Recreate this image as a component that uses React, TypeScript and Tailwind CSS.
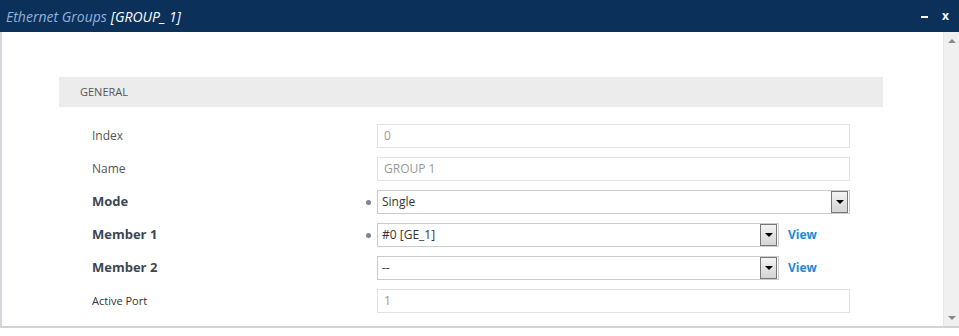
import { ReactNode } from "react";

const font = { fontFamily: '"Open Sans", "Noto Sans", sans-serif' };

function Dropdown() {
  return (
    <span className="flex h-[22px] w-[17px] items-center justify-center border border-[#777] bg-gradient-to-b from-[#f4f4f4] to-[#d4d4d4]">
      <span className="h-0 w-0 border-x-[4px] border-t-[4px] border-x-transparent border-t-black" />
    </span>
  );
}

type RowProps = {
  label: string;
  bold?: boolean;
  small?: boolean;
  required?: boolean;
  children: ReactNode;
};

function Row({ label, bold, small, required, children }: RowProps) {
  const labelCls = bold
    ? "text-[13px] font-bold text-[#3c4650]"
    : small
      ? "text-[11px] text-[#333]"
      : "text-[12px] text-[#555]";
  return (
    <div className="flex h-[24px] items-center">
      <div className={`w-[307px] pl-[33px] ${labelCls}`}>{label}</div>
      <div className="flex w-[11px] items-center justify-start">
        {required && <span className="h-[5px] w-[5px] rounded-full bg-[#7c8590]" />}
      </div>
      {children}
    </div>
  );
}

function TextBox({ value }: { value: string }) {
  return (
    <div className="flex h-[24px] w-[473px] items-center border border-[#e2e2e2] pl-[6px] text-[12px] text-[#999]">
      {value}
    </div>
  );
}

function Select({ value, width, view }: { value: string; width: string; view?: boolean }) {
  return (
    <>
      <div className={`flex h-[24px] ${width} items-center justify-between border border-[#c8cbd0] pl-[4px] pr-[1px] text-[12px] text-[#333]`}>
        <span>{value}</span>
        <Dropdown />
      </div>
      {view && <span className="ml-[9px] text-[12px] font-bold text-[#1a8ad6]">View</span>}
    </>
  );
}

export default function App() {
  return (
    <div className="relative h-[336px] w-[959px] overflow-hidden bg-white" style={font}>
      <div className="flex h-[32px] items-center justify-between bg-[#0b3059] pl-[6px] pr-[10px]">
        <div className="flex items-center gap-[4px] text-[14px] italic">
          <span className="text-[#8fb3de]">Ethernet Groups</span>
          <span className="text-white">[GROUP_ 1]</span>
        </div>
        <div className="flex items-center gap-[14px] text-white">
          <span className="mt-[1px] h-[2px] w-[7px] bg-white" />
          <span className="text-[12px] font-bold leading-none">x</span>
        </div>
      </div>

      <div className="flex h-[296px] border-b-2 border-[#cfd3d8]">
        <div className="flex-1 border-l-2 border-[#d3d6dc] pl-[57px] pt-[45px]">
          <div className="flex h-[30px] w-[824px] items-center bg-[#ececec] pl-[21px] text-[11px] text-[#555]">
            GENERAL
          </div>
          <div className="mt-[17px] flex flex-col gap-[9px]">
            <Row label="Index">
              <TextBox value="0" />
            </Row>
            <Row label="Name">
              <TextBox value="GROUP 1" />
            </Row>
            <Row label="Mode" bold required>
              <Select value="Single" width="w-[473px]" />
            </Row>
            <Row label="Member 1" bold required>
              <Select value="#0 [GE_1]" width="w-[402px]" view />
            </Row>
            <Row label="Member 2" bold>
              <Select value="--" width="w-[402px]" view />
            </Row>
            <Row label="Active Port" small>
              <TextBox value="1" />
            </Row>
          </div>
        </div>
        <div className="flex w-[16px] flex-col items-center justify-between border-l border-[#e6e6e6] bg-[#f0f0f0] pb-[6px] pt-[7px]">
          <span className="h-0 w-0 border-x-[4px] border-b-[4px] border-x-transparent border-b-[#888]" />
          <span className="h-0 w-0 border-x-[4px] border-t-[4px] border-x-transparent border-t-[#888]" />
        </div>
      </div>
    </div>
  );
}
